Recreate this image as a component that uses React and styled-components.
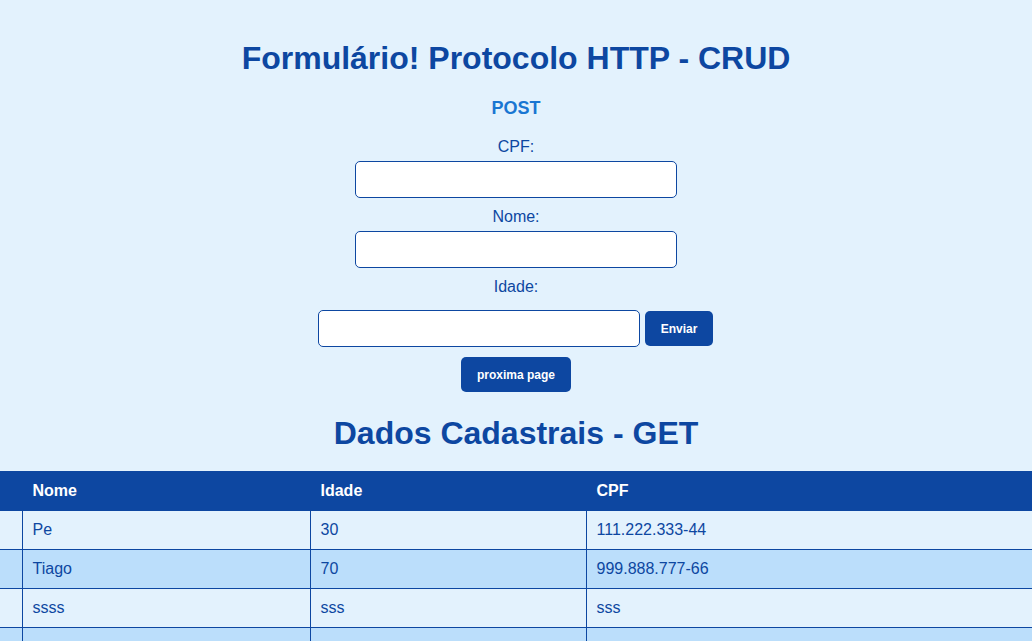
import React from 'react';
import styled, { createGlobalStyle } from 'styled-components';

const GlobalStyle = createGlobalStyle`
  html, body {
    margin: 0;
    padding: 0;
    background: #e3f2fd;
    font-family: 'Liberation Sans', Arial, sans-serif;
    overflow: hidden;
  }
`;

const Page = styled.div`
  display: flex;
  flex-direction: column;
  align-items: center;
  padding-top: 40px;
`;

const Title = styled.h1`
  margin: 0;
  font-size: 32px;
  font-weight: bold;
  color: #0d47a1;
  text-align: center;
`;

const SubTitle = styled.h3`
  margin: 21px 0 0;
  font-size: 18px;
  font-weight: bold;
  color: #1976d2;
`;

const Form = styled.form`
  display: flex;
  flex-direction: column;
  align-items: center;
  margin-top: 18px;
`;

const Label = styled.label`
  font-size: 16px;
  color: #0d47a1;
  padding-top: 1px;
  margin-bottom: ${(p) => (p.last ? '14px' : '5px')};
`;

const Input = styled.input`
  box-sizing: border-box;
  width: 322px;
  height: 37px;
  border: 1px solid #0d47a1;
  border-radius: 5px;
  background: #fff;
  margin: 0 0 ${(p) => (p.inline ? '0' : '9px')};
  padding: 0 8px;
  font-size: 16px;
  outline: none;
`;

const InlineRow = styled.div`
  display: flex;
  align-items: center;
  gap: 5px;
  margin-left: -1px;
`;

const Button = styled.button`
  height: 35px;
  padding: 0 16px;
  border: none;
  border-radius: 5px;
  background: #0d47a1;
  color: #fff;
  font-family: 'Liberation Sans', Arial, sans-serif;
  font-size: 12px;
  font-weight: bold;
  cursor: pointer;
  margin-top: ${(p) => (p.spaced ? '10px' : '0')};
`;

const SectionTitle = styled.h2`
  margin: 23px 0 19px;
  font-size: 32px;
  font-weight: bold;
  color: #0d47a1;
`;

const Table = styled.table`
  width: 100%;
  border-collapse: collapse;
  table-layout: fixed;
`;

const HeadCell = styled.th`
  background: #0d47a1;
  color: #fff;
  font-size: 16px;
  line-height: 19px;
  font-weight: bold;
  text-align: left;
  padding: 10px;
  border: 1px solid #0d47a1;
  border-top: none;
  &:first-child { border-left: none; }
  &:last-child { border-right: none; }
`;

const Row = styled.tr`
  background: ${(p) => (p.alt ? '#bbdefb' : '#e3f2fd')};
`;

const Cell = styled.td`
  font-size: 16px;
  line-height: 18px;
  color: #0d47a1;
  padding: 10px;
  border: 1px solid #0d47a1;
  &:first-child { border-left: none; }
  &:last-child { border-right: none; }
`;

const pessoas = [
  { nome: 'Pe', idade: '30', cpf: '111.222.333-44' },
  { nome: 'Tiago', idade: '70', cpf: '999.888.777-66' },
  { nome: 'ssss', idade: 'sss', cpf: 'sss' },
  { nome: '\u00a0', idade: '\u00a0', cpf: '\u00a0' }
];

export default function App() {
  return (
    <>
      <GlobalStyle />
      <Page>
        <Title>Formulário! Protocolo HTTP - CRUD</Title>
        <SubTitle>POST</SubTitle>
        <Form onSubmit={(e) => e.preventDefault()}>
          <Label htmlFor="cpf">CPF:</Label>
          <Input id="cpf" type="text" />
          <Label htmlFor="nome">Nome:</Label>
          <Input id="nome" type="text" />
          <Label htmlFor="idade" last>
            Idade:
          </Label>
          <InlineRow>
            <Input id="idade" type="text" inline />
            <Button type="submit">Enviar</Button>
          </InlineRow>
          <Button type="button" spaced>
            proxima page
          </Button>
        </Form>
        <SectionTitle>Dados Cadastrais - GET</SectionTitle>
        <Table>
          <colgroup>
            <col style={{ width: 22 }} />
            <col style={{ width: 288 }} />
            <col style={{ width: 276 }} />
            <col />
          </colgroup>
          <thead>
            <tr>
              <HeadCell />
              <HeadCell>Nome</HeadCell>
              <HeadCell>Idade</HeadCell>
              <HeadCell>CPF</HeadCell>
            </tr>
          </thead>
          <tbody>
            {pessoas.map((p, i) => (
              <Row key={i} alt={i % 2 === 1}>
                <Cell />
                <Cell>{p.nome}</Cell>
                <Cell>{p.idade}</Cell>
                <Cell>{p.cpf}</Cell>
              </Row>
            ))}
          </tbody>
        </Table>
      </Page>
    </>
  );
}
